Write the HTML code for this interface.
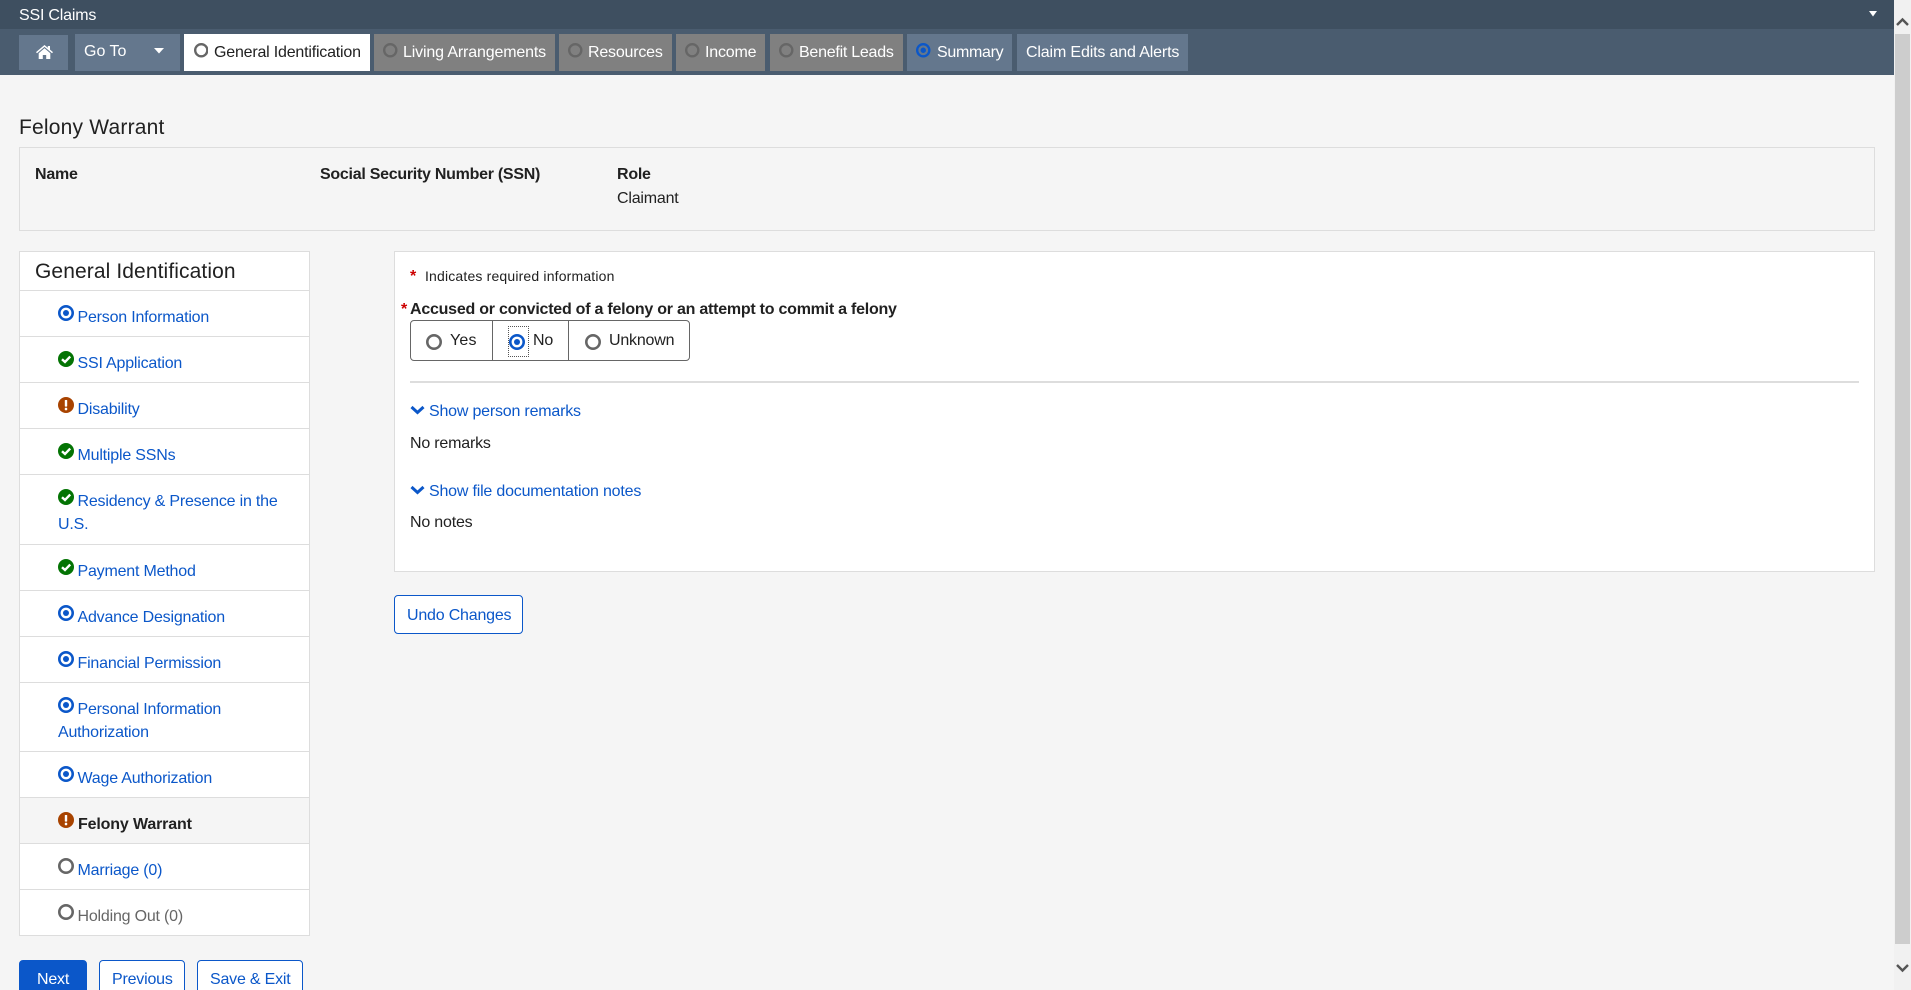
<!DOCTYPE html>
<html lang="en">
<head>
<meta charset="utf-8">
<title>Felony Warrant - SSI Claims</title>
<style>
html,body{margin:0;padding:0;width:1911px;height:990px;overflow:hidden;background:#f5f5f5;}
body{font-family:"Liberation Sans",Arial,sans-serif;font-size:16px;color:#212121;position:relative;}
.a{position:absolute;}
.t{position:absolute;white-space:nowrap;line-height:20px;letter-spacing:-.2px;margin-top:1px;}
.w{color:#fff;}
.l{color:#0b57c9;}
.b{font-weight:bold;letter-spacing:-.24px;}
.h{font-size:21px;line-height:24px;letter-spacing:.1px;margin-top:1px;}
.s{font-size:14px;letter-spacing:.17px;margin-top:0;}
.bx{position:absolute;box-sizing:border-box;}
.ic{position:absolute;width:16px;height:16px;}
.ti{position:absolute;width:14.5px;height:14.5px;top:43px;}
.tab{position:absolute;top:34px;height:37px;}
.row{position:absolute;left:20px;width:289px;height:1px;background:#ddd;}
.btn{position:absolute;box-sizing:border-box;border:1px solid #0b57c9;border-radius:4px;background:#fff;}
</style>
</head>
<body>
<svg width="0" height="0" style="position:absolute">
<defs>
<symbol id="cur" viewBox="0 0 16 16"><circle cx="8" cy="8" r="6.7" fill="none" stroke="#0b57c9" stroke-width="2.6"/><circle cx="8" cy="8" r="3" fill="#0b57c9"/></symbol>
<symbol id="ok" viewBox="0 0 16 16"><circle cx="8" cy="8" r="8" fill="#047404"/><path d="M4 8.2 L7 11 L12.2 5.6" fill="none" stroke="#fff" stroke-width="2.4"/></symbol>
<symbol id="err" viewBox="0 0 16 16"><circle cx="8" cy="8" r="8" fill="#a84300"/><rect x="6.8" y="3" width="2.4" height="6.6" rx=".6" fill="#fff"/><rect x="6.8" y="10.8" width="2.4" height="2.4" rx=".6" fill="#fff"/></symbol>
<symbol id="emp" viewBox="0 0 16 16"><circle cx="8" cy="8" r="6.7" fill="none" stroke="#666" stroke-width="2.6"/></symbol>
<symbol id="chev" viewBox="0 0 15 10"><path d="M1.5 2 L7.5 7.5 L13.5 2" fill="none" stroke="#0b57c9" stroke-width="3"/></symbol>
</defs>
</svg>

<!-- top bar -->
<div class="a" style="left:0;top:0;width:1894px;height:29px;background:#3e4f60"></div>
<div class="a" style="left:0;top:29px;width:1894px;height:46px;background:#4a5c6f"></div>
<span class="t w" style="left:19px;top:5px">SSI Claims</span>
<svg class="a" style="left:1869px;top:11px" width="8" height="6"><path d="M0 0H8L4 5.5Z" fill="#fff"/></svg>

<!-- nav -->
<div class="a" style="left:19px;top:35px;width:49px;height:35px;background:#64778d"></div>
<svg class="a" style="left:35.5px;top:45px" width="17" height="14" viewBox="0 0 17 14"><path d="M8.5 0 L11.8 2.7 V1 H14 V4.6 L17 7.1 L16 8.2 L8.5 1.9 L1 8.2 L0 7.1 Z M2.7 8.2 L8.5 3.3 L14.3 8.2 V14 H10.2 V10 H6.8 V14 H2.7 Z" fill="#fff"/></svg>
<div class="tab" style="left:75px;width:105px;background:#64778d"></div>
<span class="t w" style="left:84px;top:41px;letter-spacing:0">Go To</span>
<svg class="a" style="left:154px;top:48px" width="10" height="6"><path d="M0 0H10L5 5.5Z" fill="#fff"/></svg>

<div class="tab" style="left:184px;width:186px;background:#fff"></div>
<svg class="ti" style="left:193.5px"><use href="#emp"/></svg>
<span class="t" style="left:214px;top:41.5px">General Identification</span>

<div class="tab" style="left:374px;width:181px;background:#808080"></div>
<svg class="ti" style="left:383px"><use href="#emp"/></svg>
<span class="t w" style="left:403px;top:41.5px;letter-spacing:-.15px">Living Arrangements</span>

<div class="tab" style="left:559px;width:113px;background:#808080"></div>
<svg class="ti" style="left:568px"><use href="#emp"/></svg>
<span class="t w" style="left:588px;top:41.5px">Resources</span>

<div class="tab" style="left:676px;width:89px;background:#808080"></div>
<svg class="ti" style="left:685px"><use href="#emp"/></svg>
<span class="t w" style="left:705px;top:41.5px">Income</span>

<div class="tab" style="left:770px;width:133px;background:#808080"></div>
<svg class="ti" style="left:779px"><use href="#emp"/></svg>
<span class="t w" style="left:799px;top:41.5px;letter-spacing:-.25px">Benefit Leads</span>

<div class="tab" style="left:907px;width:105px;background:#64778d"></div>
<svg class="ti" style="left:916px"><use href="#cur"/></svg>
<span class="t w" style="left:937px;top:41.5px;letter-spacing:-.3px">Summary</span>

<div class="tab" style="left:1017px;width:171px;background:#64778d"></div>
<span class="t w" style="left:1026px;top:41.5px;letter-spacing:-.15px">Claim Edits and Alerts</span>

<!-- heading -->
<span class="t h" style="left:19px;top:115px;letter-spacing:.2px">Felony Warrant</span>
<div class="bx" style="left:19px;top:147px;width:1856px;height:84px;border:1px solid #ddd"></div>
<span class="t b" style="left:35px;top:163.5px">Name</span>
<span class="t b" style="left:320px;top:163.5px;letter-spacing:-.27px">Social Security Number (SSN)</span>
<span class="t b" style="left:617px;top:163.5px">Role</span>
<span class="t" style="left:617px;top:187.5px">Claimant</span>

<!-- sidebar -->
<div class="bx" style="left:19px;top:251px;width:291px;height:685px;background:#fff;border:1px solid #ddd"></div>
<div class="a" style="left:20px;top:797px;width:289px;height:46px;background:#f5f5f5"></div>
<span class="t h" style="left:35px;top:259px">General Identification</span>
<div class="row" style="top:290px"></div>
<div class="row" style="top:336px"></div>
<div class="row" style="top:382px"></div>
<div class="row" style="top:428px"></div>
<div class="row" style="top:474px"></div>
<div class="row" style="top:544px"></div>
<div class="row" style="top:590px"></div>
<div class="row" style="top:636px"></div>
<div class="row" style="top:682px"></div>
<div class="row" style="top:751px"></div>
<div class="row" style="top:797px"></div>
<div class="row" style="top:843px"></div>
<div class="row" style="top:889px"></div>

<svg class="ic" style="left:58px;top:305px"><use href="#cur"/></svg><span class="t l" style="left:77.5px;top:306.5px">Person Information</span>
<svg class="ic" style="left:58px;top:351px"><use href="#ok"/></svg><span class="t l" style="left:77.5px;top:352.5px">SSI Application</span>
<svg class="ic" style="left:58px;top:397px"><use href="#err"/></svg><span class="t l" style="left:77.5px;top:398.5px">Disability</span>
<svg class="ic" style="left:58px;top:443px"><use href="#ok"/></svg><span class="t l" style="left:77.5px;top:444.5px">Multiple SSNs</span>
<svg class="ic" style="left:58px;top:489px"><use href="#ok"/></svg><span class="t l" style="left:77.5px;top:490.5px">Residency &amp; Presence in the</span><span class="t l" style="left:58px;top:513.5px">U.S.</span>
<svg class="ic" style="left:58px;top:559px"><use href="#ok"/></svg><span class="t l" style="left:77.5px;top:560.5px">Payment Method</span>
<svg class="ic" style="left:58px;top:605px"><use href="#cur"/></svg><span class="t l" style="left:77.5px;top:606.5px">Advance Designation</span>
<svg class="ic" style="left:58px;top:651px"><use href="#cur"/></svg><span class="t l" style="left:77.5px;top:652.5px">Financial Permission</span>
<svg class="ic" style="left:58px;top:697px"><use href="#cur"/></svg><span class="t l" style="left:77.5px;top:698.5px">Personal Information</span><span class="t l" style="left:58px;top:721.5px">Authorization</span>
<svg class="ic" style="left:58px;top:766px"><use href="#cur"/></svg><span class="t l" style="left:77.5px;top:767.5px">Wage Authorization</span>
<svg class="ic" style="left:58px;top:812px"><use href="#err"/></svg><span class="t b" style="left:78px;top:813.5px;letter-spacing:-.15px">Felony Warrant</span>
<svg class="ic" style="left:58px;top:858px"><use href="#emp"/></svg><span class="t l" style="left:77.5px;top:859.5px">Marriage (0)</span>
<svg class="ic" style="left:58px;top:904px"><use href="#emp"/></svg><span class="t" style="left:77.5px;top:905.5px;color:#666">Holding Out (0)</span>

<!-- bottom buttons -->
<div class="btn" style="left:19px;top:960px;width:68px;height:44px;background:#0b57c9"></div>
<span class="t w" style="left:37px;top:968.5px">Next</span>
<div class="btn" style="left:99px;top:960px;width:86px;height:44px"></div>
<span class="t l" style="left:112px;top:968.5px">Previous</span>
<div class="btn" style="left:197px;top:960px;width:106px;height:44px"></div>
<span class="t l" style="left:210px;top:968.5px">Save &amp; Exit</span>

<!-- main panel -->
<div class="bx" style="left:394px;top:251px;width:1481px;height:321px;background:#fff;border:1px solid #ddd"></div>
<span class="t" style="left:410px;top:267px;color:#c00;font-weight:bold;font-size:16px;margin-top:0">*</span>
<span class="t s" style="left:425px;top:266px">Indicates required information</span>
<span class="t b" style="left:401px;top:299px;color:#c00">*</span>
<span class="t b" style="left:410px;top:299px">Accused or convicted of a felony or an attempt to commit a felony</span>

<div class="bx" style="left:410px;top:320px;width:280px;height:41px;border:1px solid #666;border-radius:4px"></div>
<div class="a" style="left:492px;top:321px;width:1px;height:39px;background:#666"></div>
<div class="a" style="left:568px;top:321px;width:1px;height:39px;background:#666"></div>
<svg class="ic" style="left:426px;top:334px"><use href="#emp"/></svg>
<span class="t" style="left:450px;top:330px;letter-spacing:.2px">Yes</span>
<div class="bx" style="left:508px;top:326px;width:21px;height:31px;border:1px dotted #555"></div>
<svg class="ic" style="left:509px;top:334px"><use href="#cur"/></svg>
<span class="t" style="left:533px;top:330px">No</span>
<svg class="ic" style="left:585px;top:334px"><use href="#emp"/></svg>
<span class="t" style="left:609px;top:330px">Unknown</span>

<div class="a" style="left:410px;top:381px;width:1449px;height:2px;background:#ddd"></div>

<svg class="a" style="left:410px;top:405px" width="15" height="10"><use href="#chev"/></svg>
<span class="t l" style="left:429px;top:400.5px">Show person remarks</span>
<span class="t" style="left:410px;top:432.5px">No remarks</span>
<svg class="a" style="left:410px;top:485px" width="15" height="10"><use href="#chev"/></svg>
<span class="t l" style="left:429px;top:480.5px">Show file documentation notes</span>
<span class="t" style="left:410px;top:511.5px">No notes</span>

<div class="btn" style="left:394px;top:595px;width:129px;height:39px"></div>
<span class="t l" style="left:407px;top:604.5px">Undo Changes</span>

<!-- scrollbar -->
<div class="a" style="left:1894px;top:0;width:17px;height:990px;background:#f1f1f1"></div>
<div class="a" style="left:1895px;top:34px;width:15px;height:910px;background:#cdcdcd"></div>
<svg class="a" style="left:1896px;top:17px" width="13" height="10"><path d="M1 8 L6.5 2.5 L12 8" fill="none" stroke="#555" stroke-width="2.4"/></svg>
<svg class="a" style="left:1896px;top:963px" width="13" height="10"><path d="M1 2 L6.5 7.5 L12 2" fill="none" stroke="#555" stroke-width="2.4"/></svg>
</body>
</html>
